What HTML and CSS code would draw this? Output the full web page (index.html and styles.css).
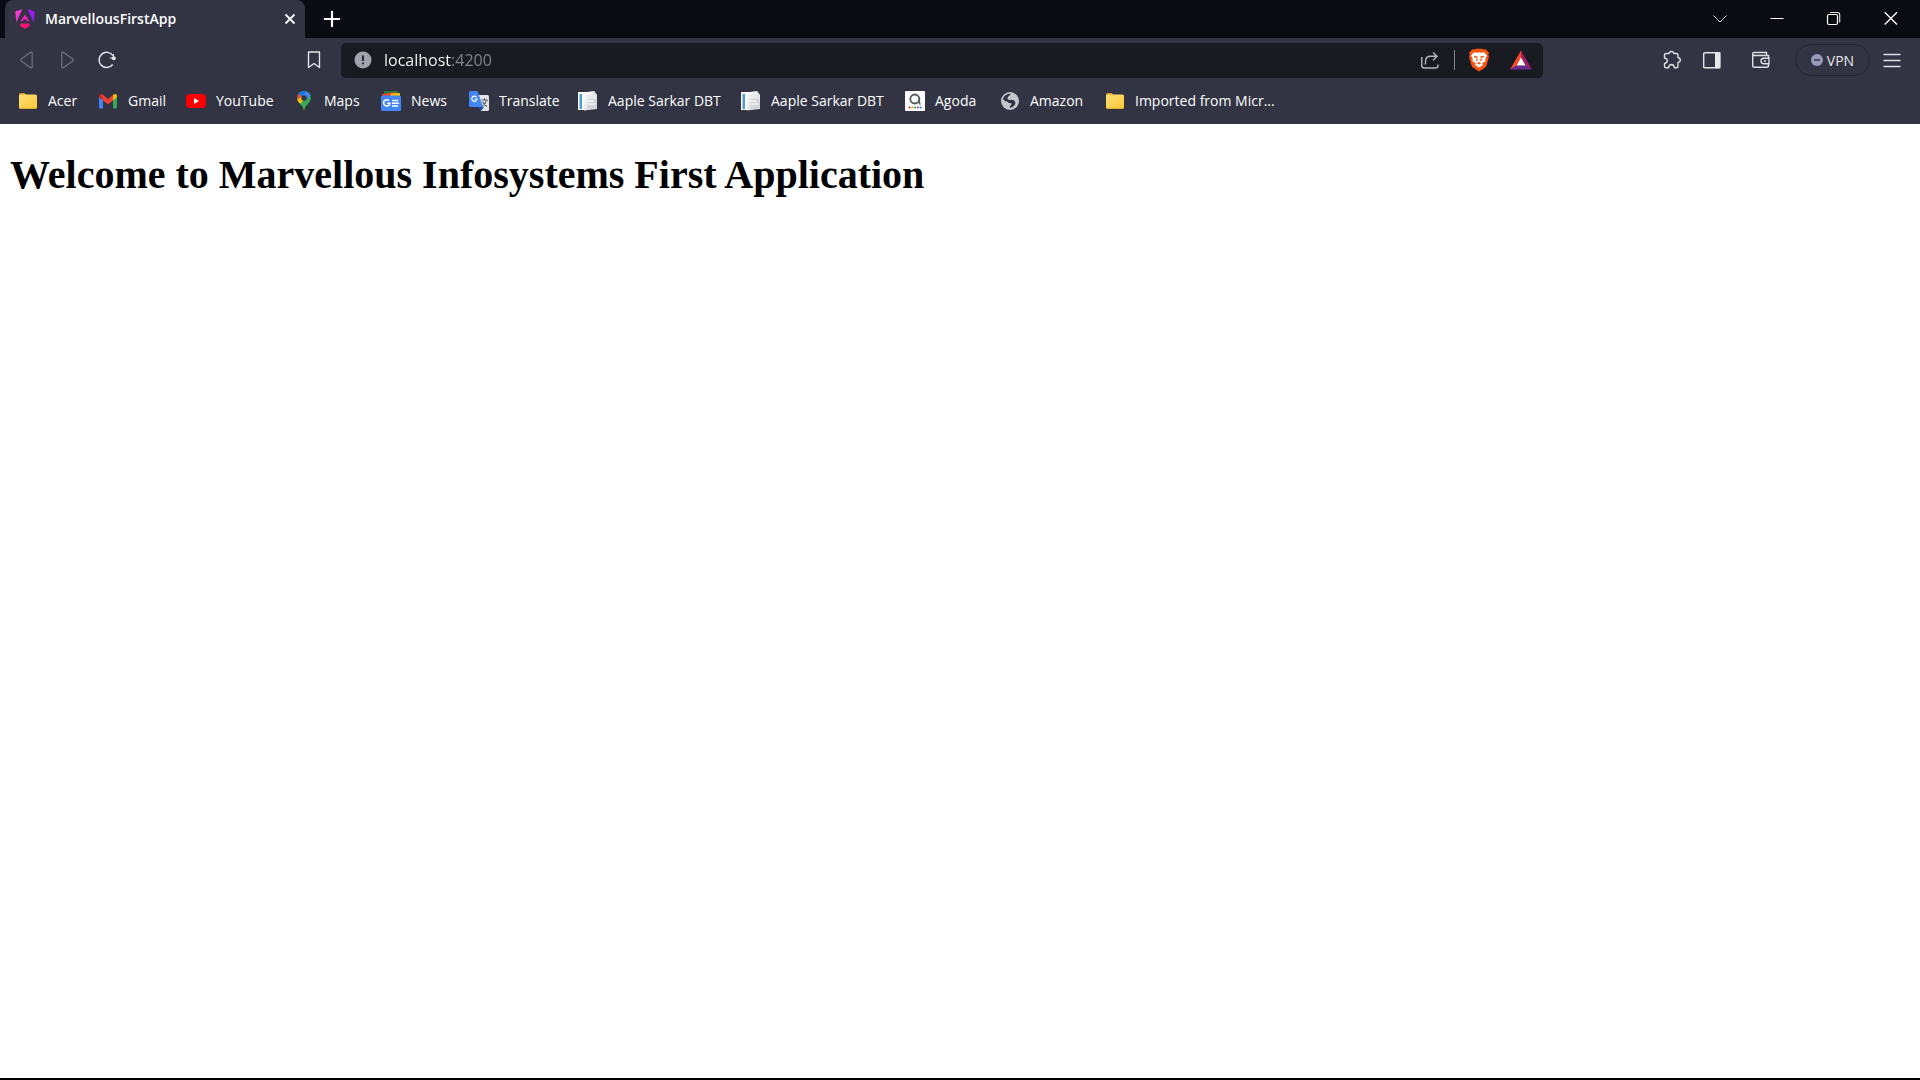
FILE: index.html
```
<!DOCTYPE html>
<html lang="en">
<head>
<meta charset="utf-8">
<title>MarvellousFirstApp</title>
<link rel="stylesheet" href="styles.css">
</head>
<body>
<svg class="defs" aria-hidden="true">
  <defs>
    <linearGradient id="ng-left" x1="0" y1="0" x2="1" y2="1"><stop offset="0" stop-color="#ff45d8"/><stop offset="1" stop-color="#e01fd0"/></linearGradient>
    <linearGradient id="ng-right" x1="0" y1="0" x2="1" y2="1"><stop offset="0" stop-color="#b51cf0"/><stop offset="1" stop-color="#7a1cff"/></linearGradient>
    <linearGradient id="ng-bottom" x1="0" y1="0" x2="1" y2="0"><stop offset="0" stop-color="#ff1a5e"/><stop offset="1" stop-color="#f00b8c"/></linearGradient>
    <linearGradient id="folder-fill" x1="0" y1="0" x2="1" y2="1"><stop offset="0" stop-color="#ffe07a"/><stop offset="1" stop-color="#fbc736"/></linearGradient>
    <linearGradient id="doc-fill" x1="0" y1="0" x2="1" y2="1"><stop offset="0" stop-color="#ffffff"/><stop offset="1" stop-color="#d3d5d8"/></linearGradient>
    <symbol id="folder" viewBox="0 0 20 20">
      <path d="M1 16V3.500Q1 2 2.500 2H6.500L8.500 4V8Z" fill="#dc9d16"/>
      <rect x="1" y="4" width="18" height="14" rx="1.500" fill="#d9a520"/>
      <rect x="1" y="3.600" width="18" height="13.600" rx="1.500" fill="url(#folder-fill)"/>
    </symbol>
    <symbol id="pages" viewBox="0 0 20 20">
      <path d="M0 1H8V19H0Z" fill="#fff"/>
      <path d="M1.500 3H4V18H1.500Z" fill="#4b9cd3"/>
      <path d="M5 1.500L16 0L19 4V18L6 19.500Z" fill="url(#doc-fill)"/>
      <path d="M8 5H14M8 8H14" stroke="#e0e2e5"/>
      <path d="M10 8H18V17L9 19Z" fill="#d2d4d9"/>
      <path d="M10 10H16M10 13H17" stroke="#f4f4f5" stroke-width="1.500"/>
      <path d="M16 0V4H19Z" fill="#d9dbdf"/>
    </symbol>
  </defs>
</svg>

<header class="browser">
  <div class="tabstrip">
    <div class="tab">
      <svg class="icon" viewBox="0 0 20 20">
        <path d="M7.500 0L.3 2.500L1.300 13.500Z" fill="url(#ng-left)"/>
        <path d="M12.500 0L19.700 2.500L18.700 13.500Z" fill="url(#ng-right)"/>
        <path d="M10 5.500L14.600 12.300H12.100L11.400 10.500H8.600L7.900 12.300H5.400Z" fill="#f11fb5"/>
        <path d="M6 14.500H14L15 16.800L10 19.900L5 16.800Z" fill="url(#ng-bottom)"/>
      </svg>
      <span class="tab-title">MarvellousFirstApp</span>
      <button class="tab-close" aria-label="Close tab"><svg class="icon" viewBox="0 0 20 20"><path d="M5.500 5.500L14.500 14.500M14.500 5.500L5.500 14.500" stroke="#fff" stroke-width="1.800"/></svg></button>
    </div>
    <button class="new-tab" aria-label="New tab"><svg class="icon" viewBox="0 0 20 20"><path d="M10 2.800V17.200M2.800 10H17.200" stroke="#fff" stroke-width="2.200" stroke-linecap="round"/></svg></button>
    <div class="window-controls">
      <button aria-label="Search tabs"><svg class="icon" viewBox="0 0 20 20"><path d="M3.500 6.500L10 13L16.500 6.500" stroke="#ddd"/></svg></button>
      <button aria-label="Minimize"><svg class="icon" viewBox="0 0 20 20"><path d="M3.500 9.500H16.500" stroke="#fff"/></svg></button>
      <button aria-label="Restore"><svg class="icon" viewBox="0 0 20 20"><rect x="3.500" y="5.500" width="10" height="10" rx="1.500" stroke="#fff" stroke-width="1.200"/><path d="M6 3.500H13.500Q15.700 3.500 15.700 5.700V13.500" stroke="#ddd" stroke-width="1.200"/></svg></button>
      <button aria-label="Close"><svg class="icon" viewBox="0 0 20 20"><path d="M3.700 3.200L16 15.500M16 3.200L3.700 15.500" stroke="#fff" stroke-width="1.300"/></svg></button>
    </div>
  </div>

  <div class="toolbar">
    <div class="nav">
      <button aria-label="Back"><svg class="icon" viewBox="0 0 20 20"><path d="M15.200 3.200V16.800Q15.200 18.500 13.500 17.600L4.500 11.200Q3 10 4.500 8.800L13.500 2.400Q15.200 1.500 15.200 3.200Z" stroke="#6c6e7b" stroke-width="1.300"/></svg></button>
      <button aria-label="Forward"><svg class="icon" viewBox="0 0 20 20"><path d="M4.800 3.200V16.800Q4.800 18.500 6.500 17.600L15.500 11.200Q17 10 15.500 8.800L6.500 2.400Q4.800 1.500 4.800 3.200Z" stroke="#6c6e7b" stroke-width="1.300"/></svg></button>
      <button aria-label="Reload"><svg class="icon" viewBox="0 0 20 20"><path d="M15.700 14.500A7.600 7.600 0 1 1 16 5.700" stroke="#e6e6e8" stroke-width="1.500"/><circle cx="16.800" cy="8.200" r="2" fill="#e6e6e8"/><path d="M16.500 4V8H12.800" stroke="#e6e6e8" stroke-width="1"/></svg></button>
      <button class="bookmark-page" aria-label="Bookmark this tab"><svg class="icon" viewBox="0 0 20 20"><path d="M4.500 2H15.500V17.500L10 13.500L4.500 17.500Z" stroke="#e6e6e8" stroke-width="1.400" stroke-linejoin="round"/></svg></button>
    </div>
    <div class="address">
      <button class="site-info" aria-label="View site information"><svg class="icon" viewBox="0 0 20 20"><circle cx="10" cy="10" r="8.500" fill="#a0a3ad"/><path d="M10 5.500V11" stroke="#181b21" stroke-width="1.800"/><circle cx="10" cy="13.500" r="1" fill="#181b21"/></svg></button>
      <input class="url" type="text" value="localhost:4200" aria-label="Address and search bar" spellcheck="false">
      <button class="share" aria-label="Share this page"><svg class="icon" viewBox="0 0 20 20"><path d="M1.800 7V15.500Q1.800 18 4.300 18H15.500Q18 18 18 16V14.500M5.500 14.500V11.500Q5.500 6.300 10.500 6.300H16.500M13 2.500L17 6.300L13 10.200" stroke="#b6b7b9" stroke-width="1.400"/></svg></button>
      <span class="divider"></span>
      <button class="shield" aria-label="Brave Shields"><svg class="icon-large" viewBox="0 0 24 24">
        <path d="M7.500 1.500L9 .8H15L16.500 1.500L18.500 1.300L22 4.800L21.300 6.700L22 8.500L19.500 17.500Q19 19 17.700 19.800L12 23.500L6.300 19.800Q5 19 4.500 17.500L2 8.500L2.700 6.700L2 4.800L5.500 1.300Z" fill="#fb5412"/>
        <path d="M7 4.300L10 4.800L12 4.200L14 4.800L17 4.300L20 7.500L18.200 11L18.600 13L15.200 15.200L16 17L12 19.500L8 17L8.800 15.200L5.400 13L5.800 11L4 7.500Z" fill="#fff"/>
        <path d="M7 7.800L10.600 8.400L10.200 10.800L11 13L9 12.400L9.600 10L7 9ZM17 7.800L13.400 8.400L13.800 10.800L13 13L15 12.400L14.400 10L17 9ZM9.600 15L12 14L14.400 15L12 16.400Z" fill="#fb5412"/>
      </svg></button>
      <button class="rewards" aria-label="Brave Rewards"><svg class="icon-large" viewBox="0 0 24 24">
        <path d="M12 2.500L1 21.500L7.500 17.800L12 10Z" fill="#ff4724"/><path d="M12 2.500L23 21.500L16.500 17.800L12 10Z" fill="#9e1f63"/><path d="M1 21.500H23L16.500 17.500H7.500Z" fill="#662d91"/><path d="M12 9.500L7.500 17.600H16.500Z" fill="#fff"/>
      </svg></button>
    </div>
    <div class="actions">
      <button aria-label="Extensions"><svg class="icon" viewBox="0 0 20 20"><path d="M4.500 3.500H7.200Q7.300 1.500 9.500 1.500T11.800 3.500H14.500Q16 3.500 16 5V7.500Q18.300 8 18.300 10T16 12.500V16Q16 17.800 14.500 17.800H12.500Q12 14.500 9.500 14.500T6.500 17.800H4.500Q2.500 17.800 2.500 16V13.500Q5.300 13 5.300 10.800T2.500 8V5Q2.500 3.500 4.500 3.500Z" stroke="#dedee2" stroke-width="1.400" stroke-linejoin="round"/></svg></button>
      <button aria-label="Show sidebar"><svg class="icon" viewBox="0 0 20 20"><rect x="1.700" y="2.700" width="16" height="15" rx="1" stroke="#e2e2e5" stroke-width="1.400"/><path d="M13 2H18.400V18.400H13Z" fill="#e8e8ea"/></svg></button>
      <button class="wallet" aria-label="Wallet"><svg class="icon" viewBox="0 0 20 20"><path d="M17.500 7.500V5.500H3Q1.700 5.500 1.700 4T3 2.500H15.500V5.500M1.700 4V15.500Q1.700 17.300 3.500 17.300H15.500Q17.500 17.300 17.500 15.500V14M18 8.300H13Q10 8.300 10 11T13 13.700H18ZM13 11H15" stroke="#dedee2" stroke-width="1.400"/></svg></button>
      <button class="vpn"><svg class="vpn-icon" viewBox="0 0 12 12"><circle cx="6" cy="6" r="6" fill="#9a9bb8"/><path d="M3 6H9" stroke="#323443" stroke-width="1.500"/></svg>VPN</button>
      <button class="menu" aria-label="Menu"><svg class="icon" viewBox="0 0 20 20"><path d="M1.500 4.500H18.500M1.500 10.500H18.500M1.500 16.500H18.500" stroke="#dedee2" stroke-width="1.500"/></svg></button>
    </div>
  </div>

  <nav class="bookmarks" aria-label="Bookmarks">
    <button class="bookmark"><svg class="icon"><use href="#folder"/></svg><span>Acer</span></button>
    <a class="bookmark" href="#"><svg class="icon" viewBox="0 0 20 20"><path d="M1 5V16Q1 17.500 2.500 17.500H5V9Z" fill="#4285f4"/><path d="M19 5V16Q19 17.500 17.500 17.500H15V9Z" fill="#34a853"/><path d="M1 6V5Q1 3 3 3L5 4V9.500Z" fill="#c5221f"/><path d="M19 6V5Q19 3 17 3L15 4V9.500Z" fill="#fbbc04"/><path d="M3 3Q4 3 5 4L10 8L15 4V9.500L10 13.300L5 9.500Z" fill="#ea4335"/></svg><span>Gmail</span></a>
    <a class="bookmark" href="#"><svg class="icon" viewBox="0 0 20 20"><rect x="0" y="3" width="20" height="14" rx="3.500" fill="#f00"/><path d="M8 7V13L13 10Z" fill="#fff"/></svg><span>YouTube</span></a>
    <a class="bookmark" href="#"><svg class="icon" viewBox="0 0 20 20"><path d="M10 20Q9.500 16 6 12.800Q3 9.500 3 7A7 7 0 0 1 17 7Q17 9.500 14 12.800Q10.500 16 10 20Z" fill="#34a853"/><path d="M4.600 2.600L8 5.500L3.200 9Q2.600 5 4.600 2.600Z" fill="#ea4335"/><path d="M4.600 2.600Q6.500 0 10 0L12.200 .4L7.500 5.500Z" fill="#1a73e8"/><path d="M12.200 .4Q15.500 1.500 16.500 4.500L12 9.500L7.600 9.300L7.500 5.500Z" fill="#4285f4"/><path d="M3.200 8.500L8 5.500L9 10L6 12.800Q4 10.800 3.200 8.500Z" fill="#fbbc04"/><circle cx="10" cy="7" r="2.700" fill="#323443"/></svg><span>Maps</span></a>
    <a class="bookmark" href="#"><svg class="icon" viewBox="0 0 20 20"><path d="M3 0H17V6H3Z" fill="#188038"/><path d="M1 3L14 1L19 7H1Z" fill="#ea4335"/><path d="M10 2.500L19 2V8H8Z" fill="#fbbc04"/><rect x="0" y="4.500" width="20" height="15.500" rx="1.500" fill="#4285f4"/><path d="M8 9.500A3.200 3.200 0 1 0 9 12.200H6M11 9.500H17M11 12.200H18M11 15H17" stroke="#fff" stroke-width="1.500"/></svg><span>News</span></a>
    <a class="bookmark" href="#"><svg class="icon" viewBox="0 0 20 20"><path d="M8 4H18.500Q20 4 20 5.500V18.500Q20 20 18.500 20H12Z" fill="#e1e3e6"/><path d="M9 16H15L12 20Z" fill="#174ea6"/><path d="M1.500 0H8.500L14 16H1.500Q0 16 0 14.500V1.500Q0 0 1.500 0Z" fill="#4285f4"/><path d="M7.500 6.200A2.600 2.600 0 1 0 8 8H5.500" stroke="#fff" stroke-width="1.200"/><path d="M12.500 9H19M15.500 7V9M17.500 9Q16.500 13 13.500 15M13.500 10.500Q15 14 18 15.500" stroke="#5f6368" stroke-width="1.100"/></svg><span>Translate</span></a>
    <a class="bookmark" href="#"><svg class="icon"><use href="#pages"/></svg><span>Aaple Sarkar DBT</span></a>
    <a class="bookmark" href="#"><svg class="icon"><use href="#pages"/></svg><span>Aaple Sarkar DBT</span></a>
    <a class="bookmark" href="#"><svg class="icon" viewBox="0 0 20 20"><rect width="20" height="20" rx="1" fill="#fff"/><circle cx="9.800" cy="8" r="4.500" stroke="#55565a" stroke-width="1.800"/><path d="M14.300 8V11.500Q14.300 13 15.500 13" stroke="#55565a" stroke-width="1.600"/><circle cx="4.500" cy="16.500" r="1.100" fill="#e12d2d"/><circle cx="7.300" cy="16.500" r="1.100" fill="#f5a623"/><circle cx="10.100" cy="16.500" r="1.100" fill="#2fa84f"/><circle cx="12.900" cy="16.500" r="1.100" fill="#8e44ad"/><circle cx="15.700" cy="16.500" r="1.100" fill="#2f80ed"/></svg><span>Agoda</span></a>
    <a class="bookmark" href="#"><svg class="icon" viewBox="0 0 20 20"><circle cx="10" cy="10" r="9" fill="#c5c7cd"/><path d="M3 8.500Q3.500 4 8 2.900Q10 2.600 11 3L8.300 5.500Q7 6.500 7.700 8Q9 9.500 11.500 8.800Q14 8.500 15 10.500Q16 12.500 14.500 14.200Q12.500 16.800 9.500 16.800L10.500 14.500L12 12.800Q10.500 11.800 9 12Q7.500 10.200 5.500 10.200Z" fill="#323443"/></svg><span>Amazon</span></a>
    <button class="bookmark"><svg class="icon"><use href="#folder"/></svg><span>Imported from Micr...</span></button>
  </nav>
</header>

<main class="page">
  <h1>Welcome to Marvellous Infosystems First Application</h1>
</main>
</body>
</html>
```
FILE: styles.css
```
* {
  box-sizing: border-box;
}

body {
  display: flex;
  flex-direction: column;
  min-height: 100vh;
  margin: 0;
  background: #fff;
  font-family: "Open Sans", "Noto Sans", sans-serif;
  font-size: 14px;
  color: #fff;
}

button,
input {
  margin: 0;
  padding: 0;
  border: 0;
  background: none;
  color: inherit;
  font: inherit;
}

button {
  display: flex;
  align-items: center;
  justify-content: center;
}

.defs {
  position: absolute;
  width: 0;
  height: 0;
}

.icon,
.icon-large {
  flex: none;
  width: 20px;
  height: 20px;
  fill: none;
}

.icon-large {
  width: 24px;
  height: 24px;
}

.browser {
  background: #323443;
}

/* Tab strip */
.tabstrip {
  display: flex;
  height: 38px;
  padding: 0 1px 0 5px;
  background: #0b0b14;
}

.tab {
  display: flex;
  align-items: center;
  gap: 10px;
  width: 300px;
  padding: 0 5px 0 10px;
  border-radius: 8px 8px 0 0;
  background: #323443;
}

.tab-title,
.bookmark span {
  padding-bottom: 2px;
}

.tab-title {
  flex: 1;
  font-weight: 600;
}

.new-tab {
  width: 54px;
}

.window-controls {
  display: flex;
  margin-left: auto;
}

.window-controls button {
  width: 57px;
}

/* Toolbar */
.toolbar {
  display: flex;
  align-items: center;
  height: 44px;
  padding: 0 6px 0 7px;
}

.nav {
  display: flex;
  width: 334px;
  padding-right: 7px;
}

.nav button {
  width: 40px;
  height: 34px;
}

.nav .bookmark-page {
  margin-left: auto;
}

.address {
  display: flex;
  flex: 1;
  align-items: center;
  height: 35px;
  padding: 0 10px 0 12px;
  border-radius: 5px;
  background: #181b21;
}

/* The port is dimmed against the host name */
.url {
  flex: 1;
  height: 34px;
  margin-left: 11px;
  background: linear-gradient(90deg, #fff 68px, #85878c 68px);
  -webkit-background-clip: text;
  background-clip: text;
  -webkit-text-fill-color: transparent;
  font-size: 16px;
  outline: 0;
}

.divider {
  width: 1px;
  height: 20px;
  margin: 0 12px 0 14px;
  background: #85878c;
}

.rewards {
  margin-left: 18px;
}

.actions {
  display: flex;
  align-items: center;
  justify-content: flex-end;
  width: 371px;
}

.actions button {
  width: 40px;
  height: 32px;
}

.actions .wallet {
  margin: 0 14px 0 9px;
}

.actions .vpn {
  gap: 4px;
  width: 75px;
  border: 1px solid #232530;
  border-radius: 16px;
  color: #e6e6ea;
}

.vpn-icon {
  width: 12px;
  height: 12px;
}

.actions .menu {
  width: 44px;
}

/* Bookmarks bar */
.bookmarks {
  display: grid;
  grid-template-columns: 80px 88px 108px 87px 88px 109px 163px 164px 95px 105px auto;
  justify-content: start;
  height: 42px;
  padding: 0 18px 4px;
}

.bookmark {
  display: flex;
  align-items: center;
  justify-content: flex-start;
  gap: 10px;
  color: #fff;
  text-decoration: none;
  white-space: nowrap;
}

/* Page content */
.page {
  flex: 1;
  padding: 0 10px;
  border-bottom: 2px solid #000;
  color: #000;
}

h1 {
  margin: 27px 0;
  font-family: "Liberation Serif", serif;
  font-size: 40px;
  font-weight: bold;
}
```
